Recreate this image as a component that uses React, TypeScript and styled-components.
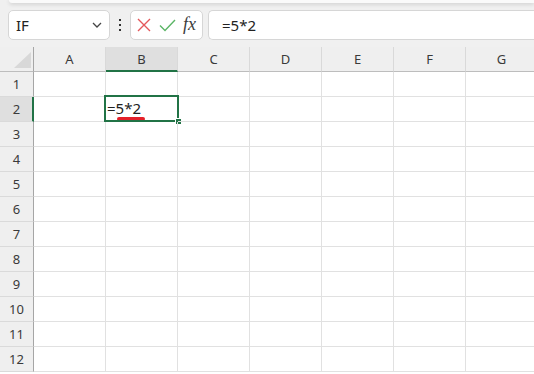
import React from "react";
import styled, { createGlobalStyle } from "styled-components";

const GREEN = "#217346";

const Global = createGlobalStyle`
  html, body { margin: 0; padding: 0; background: #f0f0f0; overflow: hidden; }
  * { box-sizing: border-box; }
  body { font-family: "Noto Sans", "Open Sans", sans-serif; color: #262626; }
`;

const Window = styled.div`
  width: 534px;
  height: 374px;
  overflow: hidden;
  display: flex;
  flex-direction: column;
  background: #f0f0f0;
`;

const RibbonEdge = styled.div`
  height: 3px;
  margin-left: 9px;
  background: #fafafa;
  border-bottom-left-radius: 6px;
  box-shadow: 0 1px 4px rgba(0, 0, 0, 0.18);
  flex: none;
`;

const FormulaBar = styled.div`
  display: flex;
  align-items: stretch;
  height: 30px;
  margin: 7px 0 0 8px;
  flex: none;
`;

const Box = styled.div`
  background: #fff;
  border: 1px solid #d6d6d6;
  border-radius: 5px;
  display: flex;
  align-items: center;
`;

const NameBox = styled(Box)`
  width: 102px;
  padding: 0 7px 0 7px;
  justify-content: space-between;
  font-size: 15px;
  color: #222;
`;

const Dots = styled.div`
  width: 20px;
  display: flex;
  align-items: center;
  justify-content: center;
`;

const EditButtons = styled(Box)`
  width: 73px;
  padding: 0 3px 0 6px;
  justify-content: space-between;
`;

const FxLabel = styled.span`
  font-family: "Liberation Serif", "DejaVu Serif", serif;
  font-style: italic;
  font-size: 18px;
  color: #3c3c3c;
  padding-right: 3px;
  margin-top: -2px;
`;

const FormulaInput = styled(Box)`
  flex: 1;
  margin-left: 5px;
  border-right: none;
  border-top-right-radius: 0;
  border-bottom-right-radius: 0;
  padding-left: 13px;
  font-size: 15px;
  color: #222;
`;

const Sheet = styled.div`
  margin-top: 7px;
  display: grid;
  grid-template-columns: 34px repeat(7, 72px);
  grid-auto-rows: 25px;
  background: #fff;
  flex: 1;
`;

const Corner = styled.div`
  background: #efefef;
  border-right: 1px solid #a6a6a6;
  border-bottom: 1px solid #bdbdbd;
  display: flex;
  align-items: flex-end;
  justify-content: flex-end;
  padding: 0 2px 3px 0;
`;

const ColHeader = styled.div<{ $active?: boolean }>`
  background: ${(p) => (p.$active ? "#dfdfdf" : "#efefef")};
  border-right: 1px solid #d9d9d9;
  border-bottom: ${(p) => (p.$active ? `2px solid ${GREEN}` : "1px solid #bdbdbd")};
  display: flex;
  align-items: center;
  justify-content: center;
  font-size: 13px;
  color: #3a3a3a;
  padding-bottom: ${(p) => (p.$active ? "0" : "1px")};
`;

const RowHeader = styled.div<{ $active?: boolean }>`
  background: ${(p) => (p.$active ? "#dfdfdf" : "#efefef")};
  border-right: ${(p) => (p.$active ? `2px solid ${GREEN}` : "1px solid #a6a6a6")};
  border-bottom: 1px solid #dadada;
  display: flex;
  align-items: center;
  justify-content: center;
  font-size: 13px;
  color: #3a3a3a;
  padding-left: ${(p) => (p.$active ? "1px" : "0")};
`;

const Cell = styled.div`
  position: relative;
  border-right: 1px solid #e1e1e1;
  border-bottom: 1px solid #e1e1e1;
  font-size: 15px;
  color: #222;
  display: flex;
  align-items: center;
  padding: 0 0 3px 1px;
`;

const Selection = styled.div`
  position: absolute;
  left: -2px;
  top: -2px;
  right: -2px;
  bottom: -1px;
  border: 2px solid ${GREEN};
  pointer-events: none;
`;

const FillHandle = styled.div`
  position: absolute;
  right: -4px;
  bottom: -4px;
  width: 6px;
  height: 6px;
  background: ${GREEN};
  border: 1px solid #fff;
  border-right: none;
  border-bottom: none;
`;

const Squiggle = styled.div`
  position: absolute;
  left: 11px;
  top: 20px;
  width: 28px;
  height: 4px;
  border-radius: 2px;
  background: #e4202a;
`;

const columns = ["A", "B", "C", "D", "E", "F", "G"];
const rows = Array.from({ length: 12 }, (_, i) => i + 1);

const Chevron = () => (
  <svg width="10" height="6" viewBox="0 0 10 6">
    <path d="M1 1 L5 5 L9 1" fill="none" stroke="#444" strokeWidth="1.3" />
  </svg>
);

const VerticalDots = () => (
  <svg width="4" height="14" viewBox="0 0 4 14">
    <rect x="1" y="1" width="2" height="2" fill="#333" />
    <rect x="1" y="6" width="2" height="2" fill="#333" />
    <rect x="1" y="11" width="2" height="2" fill="#333" />
  </svg>
);

const CancelIcon = () => (
  <svg width="14" height="14" viewBox="0 0 14 14">
    <path d="M1 1 L13 13 M13 1 L1 13" stroke="#e4585b" strokeWidth="1.4" fill="none" />
  </svg>
);

const EnterIcon = () => (
  <svg width="17" height="13" viewBox="0 0 17 13">
    <path d="M1 6.5 L6 11.5 L16 1" stroke="#5bb566" strokeWidth="1.4" fill="none" />
  </svg>
);

const CornerTriangle = () => (
  <svg width="17" height="16" viewBox="0 0 17 16">
    <path d="M17 0 L17 16 L0 16 Z" fill="#d8d8d8" />
  </svg>
);

export default function App() {
  return (
    <Window>
      <Global />
      <RibbonEdge />
      <FormulaBar>
        <NameBox>
          <span>IF</span>
          <Chevron />
        </NameBox>
        <Dots>
          <VerticalDots />
        </Dots>
        <EditButtons>
          <CancelIcon />
          <EnterIcon />
          <FxLabel>fx</FxLabel>
        </EditButtons>
        <FormulaInput>=5*2</FormulaInput>
      </FormulaBar>
      <Sheet>
        <Corner>
          <CornerTriangle />
        </Corner>
        {columns.map((c) => (
          <ColHeader key={c} $active={c === "B"}>
            {c}
          </ColHeader>
        ))}
        {rows.map((r) => (
          <React.Fragment key={r}>
            <RowHeader $active={r === 2}>{r}</RowHeader>
            {columns.map((c) => {
              const active = r === 2 && c === "B";
              return (
                <Cell key={c}>
                  {active && (
                    <>
                      =5*2
                      <Squiggle />
                      <Selection>
                        <FillHandle />
                      </Selection>
                    </>
                  )}
                </Cell>
              );
            })}
          </React.Fragment>
        ))}
      </Sheet>
    </Window>
  );
}
